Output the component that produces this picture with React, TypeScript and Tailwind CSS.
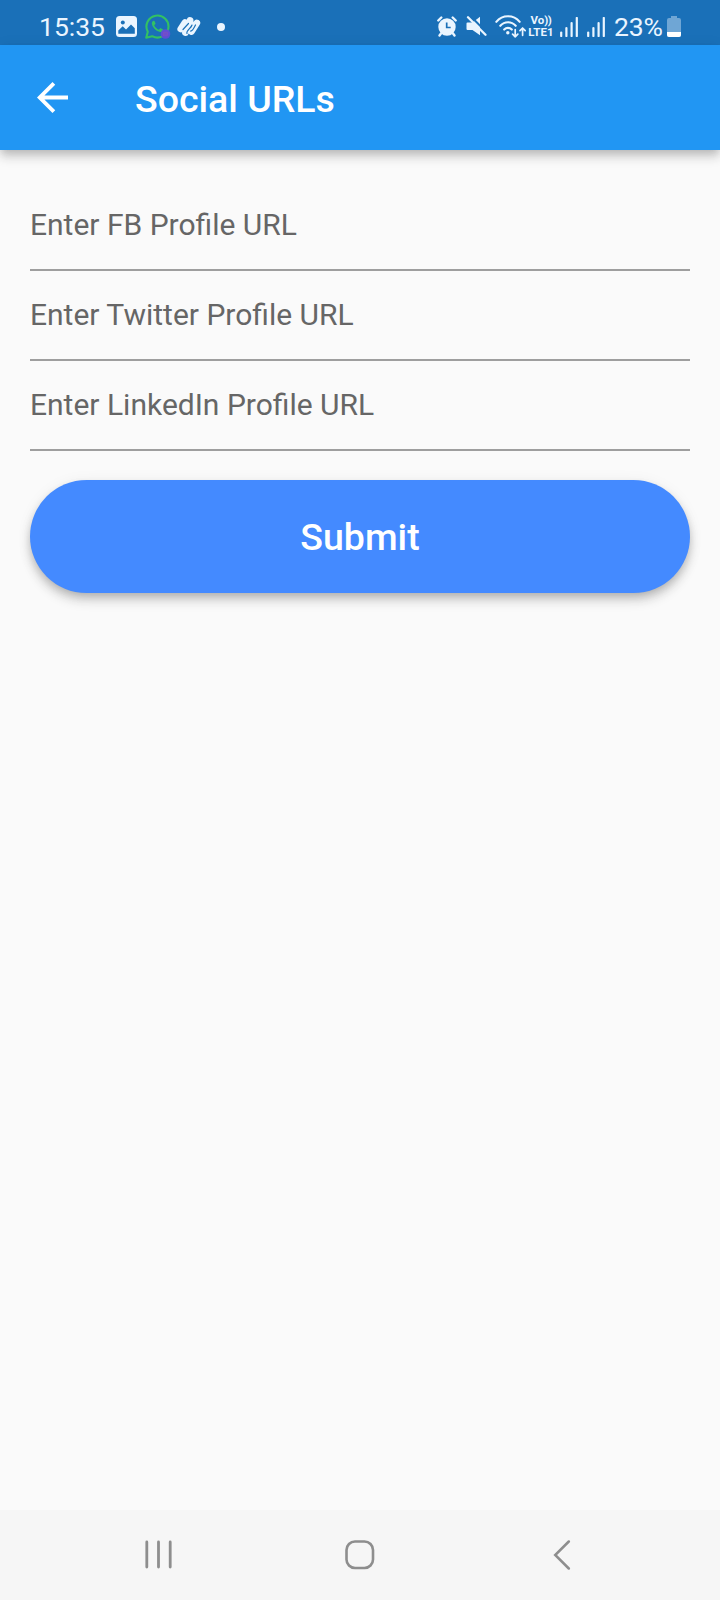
const FIELDS = [
  "Enter FB Profile URL",
  "Enter Twitter Profile URL",
  "Enter LinkedIn Profile URL",
];

const SignalIcon = ({ className }: { className?: string }) => (
  <svg width="18" height="20" viewBox="0 0 18 20" className={className}>
    <g stroke="currentColor" strokeWidth="2.2" strokeLinecap="round">
      <path d="M1.2 15.5V19" />
      <path d="M6.4 11V19" />
      <path d="M11.6 6V19" />
      <path d="M16.8 1V19" />
    </g>
  </svg>
);

const StatusBar = () => (
  <div className="flex h-[45px] items-center bg-[#1a70b8] pt-[8px] pl-[39px] pr-[39px] text-[#eaf5ff]">
    <span className="w-[77px] pt-[2px] text-[26.5px] leading-none">15:35</span>

    <svg width="21" height="21" viewBox="0 0 21 21">
      <rect width="21" height="21" rx="3.5" fill="currentColor" />
      <circle cx="6.8" cy="6.6" r="2" fill="#1a70b8" />
      <path
        d="M2.3 17.8v-3.3l4.4-4.2 3.3 3.2 5-5 3.8 3.8v5.5z"
        fill="#1a70b8"
      />
    </svg>

    <svg width="26" height="25" viewBox="0 0 26 25" className="ml-[8px]">
      <path
        d="M1.2 23.8l1.6-6A11 11 0 1 1 7.2 22.2z"
        fill="none"
        stroke="#33c163"
        strokeWidth="2.1"
        strokeLinejoin="round"
      />
      <path
        d="M8.6 6.8c-1.3.4-2 1.7-1.7 3.2.8 3.8 4.5 7.3 8.3 8 1.6.2 3-.5 3.2-2.2l-3-1.8-1.6 1.7c-2.1-.8-3.8-2.5-4.6-4.4l1.4-1.5-1.1-2.9z"
        fill="#33c163"
      />
      <circle cx="20.5" cy="20" r="4.8" fill="#5e4fd6" />
      <path
        d="M18.4 18.3h4v3.4h-4zM18.4 20h4"
        fill="none"
        stroke="#7c4fc4"
        strokeWidth="1"
      />
    </svg>

    <svg width="24" height="21" viewBox="0 0 24 21" className="ml-[6px]">
      <g
        fill="none"
        stroke="currentColor"
        strokeWidth="6.8"
        strokeLinecap="round"
      >
        <path d="M3.8 13L8 6.5" />
        <path d="M8.5 16.5L13 4.5" />
        <path d="M14.5 15.5L19.8 7" />
        <path d="M9 13L14 8" />
      </g>
      <path
        d="M6 13.5l5.5-6M10 17.500c-1-3 4-5 5-8.500M13.500 15c2 .500 3.500-3 5-6"
        fill="none"
        stroke="#1a70b8"
        strokeWidth="1.2"
        strokeLinecap="round"
      />
    </svg>

    <span className="ml-[16px] size-[8px] rounded-full bg-current" />

    <div className="ml-auto flex items-center">
      <svg width="20" height="21" viewBox="0 0 20 21">
        <path
          d="M1.3 4.5l3-3M18.7 4.5l-3-3M4 17.5l-1.5 2M16 17.5l1.5 2"
          stroke="currentColor"
          strokeWidth="2.4"
          strokeLinecap="round"
        />
        <circle cx="10" cy="11" r="8.7" fill="currentColor" />
        <path
          d="M9.7 6.5v5h4"
          fill="none"
          stroke="#1a70b8"
          strokeWidth="1.7"
        />
      </svg>

      <svg width="21" height="21" viewBox="0 0 21 21" className="ml-[9px]">
        <path
          d="M1.5 6.5h5L14 .8v18.400L6.500 14h-5a1 1 0 0 1-1-1V7.500a1 1 0 0 1 1-1z"
          fill="currentColor"
        />
        <path d="M3.6-.8L21.6 17.2" stroke="#1a70b8" strokeWidth="2" />
        <path
          d="M2 1.3l17.5 17.5"
          stroke="currentColor"
          strokeWidth="2.3"
          strokeLinecap="round"
        />
      </svg>

      <svg width="32" height="23" viewBox="0 0 32 23" className="ml-[8px]">
        <g
          fill="none"
          stroke="currentColor"
          strokeWidth="2.1"
          strokeLinecap="round"
        >
          <path d="M1.3 6.8C7.5-.6 18.5-.6 24.7 6.8" />
          <path d="M5.3 10.8c4.3-4.8 11.1-4.8 15.400 0" />
          <path d="M9.2 14.600c2.200-2.300 5.400-2.300 7.600 0" />
        </g>
        <circle cx="12.8" cy="17.8" r="1.7" fill="currentColor" />
        <g
          fill="none"
          stroke="currentColor"
          strokeWidth="1.7"
          strokeLinecap="round"
          strokeLinejoin="round"
        >
          <path d="M20.200 14.600v7.200M17.600 19.200l2.600 2.600 2.600-2.600" />
          <path d="M27.600 20.300v-7.300M25 15.600l2.600-2.600 2.600 2.600" />
        </g>
      </svg>

      <div className="ml-[1px] w-[26px] text-center text-[11.5px] leading-[11.5px] font-bold">
        <div>
          Vo<span className="tracking-[-0.5px]">))</span>
        </div>
        <div className="tracking-[0.1px]">LTE1</div>
      </div>

      <SignalIcon className="ml-[6px]" />
      <SignalIcon className="ml-[9px]" />

      <span className="ml-[9px] w-[49px] pt-[2px] text-[26.5px] leading-none tracking-[-0.2px]">
        23%
      </span>

      <svg width="14" height="21" viewBox="0 0 14 21" className="ml-[4px]">
        <path
          d="M4 0h6v2h2a2 2 0 0 1 2 2v15a2 2 0 0 1-2 2H2a2 2 0 0 1-2-2V4a2 2 0 0 1 2-2h2z"
          fill="#6fa6d5"
        />
        <path d="M0 16h14v3a2 2 0 0 1-2 2H2a2 2 0 0 1-2-2z" fill="#fff" />
      </svg>
    </div>
  </div>
);

const AppBar = () => (
  <header className="flex h-[105px] items-center bg-[#2196f3] pl-[37px] text-white shadow-[0_4px_8px_-2px_rgba(0,0,0,0.16),0_8px_10px_0_rgba(0,0,0,0.12),0_2px_16px_0_rgba(0,0,0,0.06)]">
    <button type="button" aria-label="Back">
      <svg width="31" height="31" viewBox="4 4 16 16">
        <path
          d="M20 11H7.83l5.59-5.59L12 4l-8 8 8 8 1.41-1.41L7.83 13H20v-2z"
          fill="currentColor"
        />
      </svg>
    </button>
    <h1 className="ml-[67px] pt-[4px] text-[37.5px] leading-none font-medium">
      Social URLs
    </h1>
  </header>
);

const NavigationBar = () => (
  <nav className="flex h-[90px] items-center justify-between bg-[#f6f6f6] pr-[149px] pb-[1px] pl-[145px] text-[#8e8e8e]">
    <svg width="28" height="29" viewBox="0 0 28 29">
      <path
        d="M1.8 1.9v25.2M13.5 1.9v25.2M25.2 1.9v25.2"
        stroke="currentColor"
        strokeWidth="2.8"
        strokeLinecap="round"
      />
    </svg>
    <svg width="30" height="30" viewBox="0 0 30 30" className="mr-[7px]">
      <rect
        x="1.5"
        y="1.5"
        width="26.5"
        height="26.5"
        rx="8.5"
        fill="none"
        stroke="currentColor"
        strokeWidth="2.6"
      />
    </svg>
    <svg width="18" height="30" viewBox="0 0 18 30">
      <path
        d="M15.8 1.5L2.2 15l13.6 13.5"
        fill="none"
        stroke="currentColor"
        strokeWidth="2.5"
        strokeLinecap="round"
      />
    </svg>
  </nav>
);

export default function App() {
  return (
    <div className="flex h-[1600px] w-[720px] flex-col bg-[#fafafa] font-[Roboto,sans-serif]">
      <StatusBar />
      <AppBar />

      <main className="flex-1 px-[30px] pt-[31px]">
        <form onSubmit={(e) => e.preventDefault()}>
          {FIELDS.map((label) => (
            <input
              key={label}
              type="text"
              placeholder={label}
              className="block h-[90px] w-full border-b-2 border-[#9e9e9e] pb-[2px] text-[30px] text-[#333] outline-none placeholder:text-[#666]"
            />
          ))}
          <button
            type="submit"
            className="mt-[29px] flex h-[112.5px] w-full items-center justify-center rounded-full bg-[#448aff] pt-[2px] text-[37.5px] font-medium text-white shadow-[0_4px_8px_-2px_rgba(0,0,0,0.18),0_8px_12px_0_rgba(0,0,0,0.14),0_2px_16px_0_rgba(0,0,0,0.06)]"
          >
            Submit
          </button>
        </form>
      </main>

      <NavigationBar />
    </div>
  );
}
